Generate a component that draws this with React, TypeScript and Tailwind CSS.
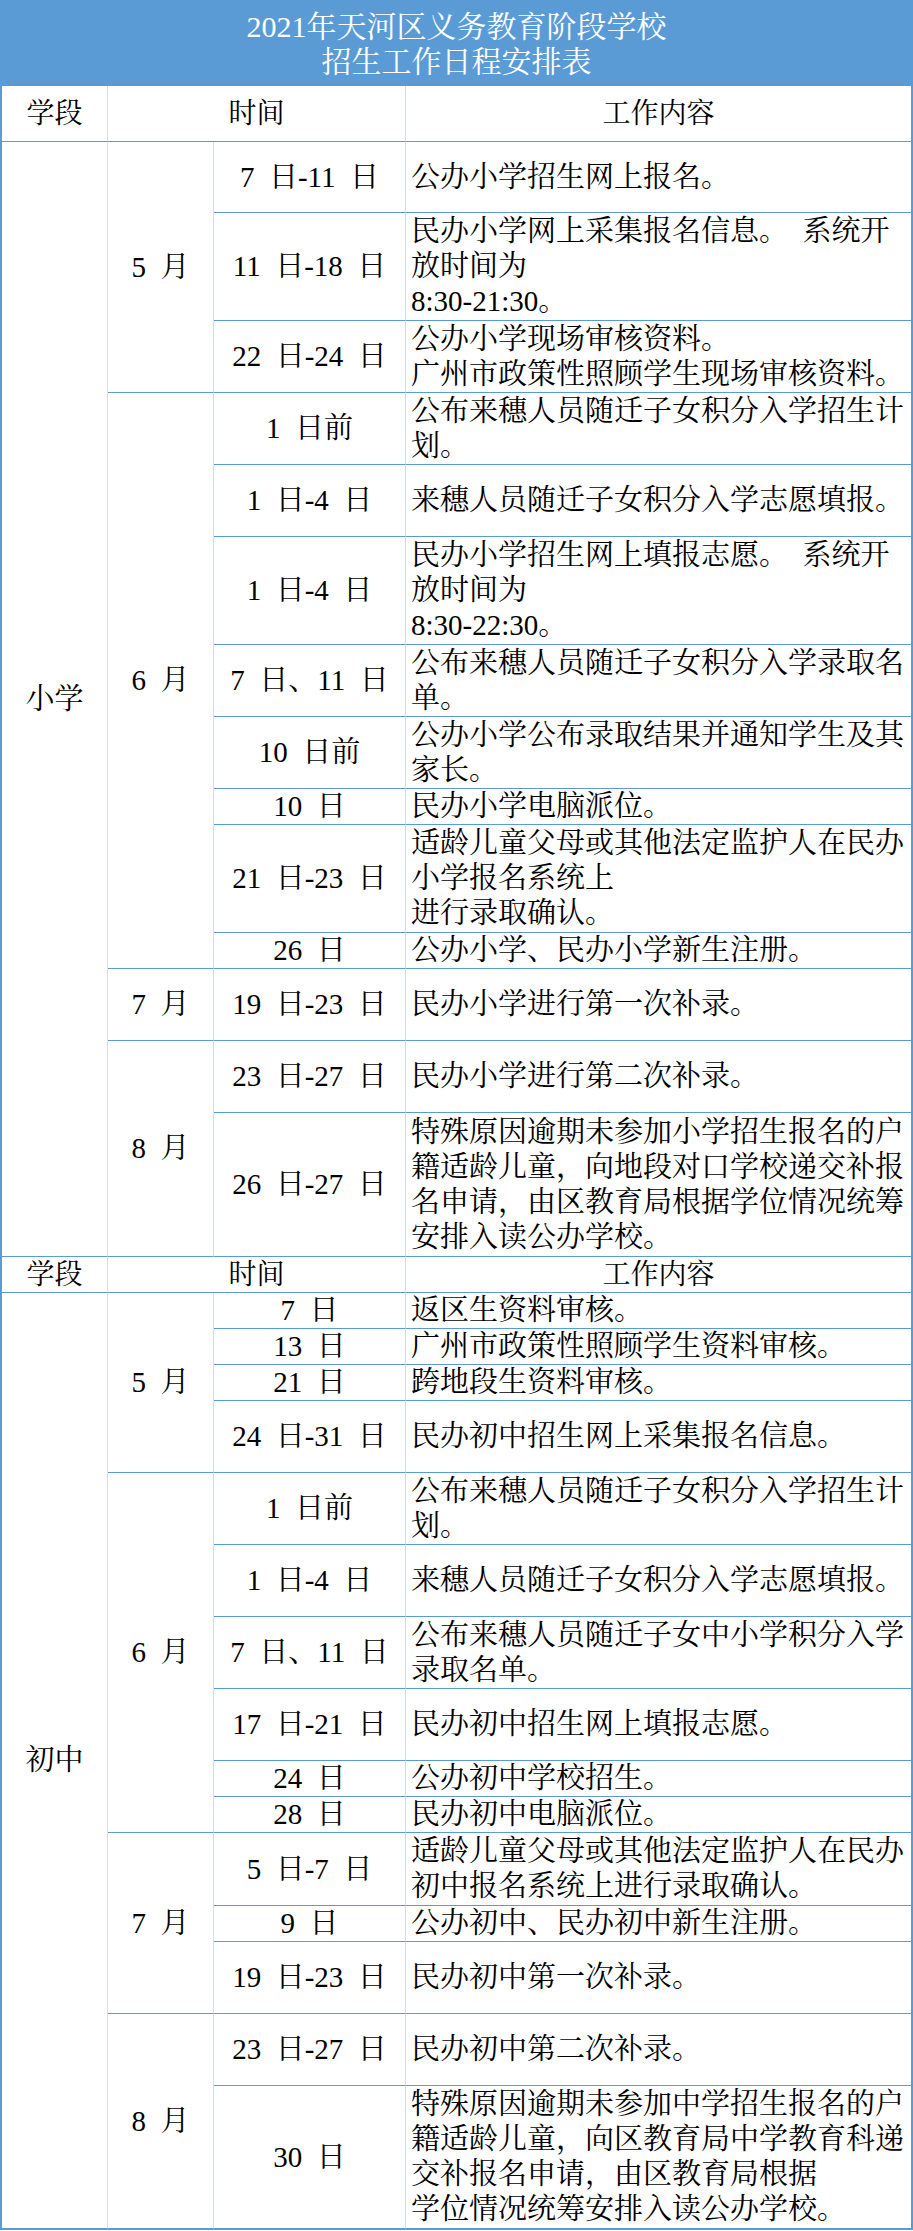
import React from 'react';

type Row = { day: string; lines: string[]; h: string };
type Month = { month: string; rows: Row[] };
type Stage = { stage: string; months: Month[] };

const S = '\u2002';

const primary: Stage = {
    stage: '小学',
    months: [
        {
            month: `5${S}月`,
            rows: [
                { day: `7${S}日-11${S}日`, lines: ['公办小学招生网上报名。'], h: 'h-[71px]' },
                { day: `11${S}日-18${S}日`, lines: [`民办小学网上采集报名信息。${S}系统开`, '放时间为', '8:30-21:30。'], h: 'h-[108px]' },
                { day: `22${S}日-24${S}日`, lines: ['公办小学现场审核资料。', '广州市政策性照顾学生现场审核资料。'], h: 'h-[72px]' },
            ],
        },
        {
            month: `6${S}月`,
            rows: [
                { day: `1${S}日前`, lines: ['公布来穗人员随迁子女积分入学招生计', '划。'], h: 'h-[72px]' },
                { day: `1${S}日-4${S}日`, lines: ['来穗人员随迁子女积分入学志愿填报。'], h: 'h-[72px]' },
                { day: `1${S}日-4${S}日`, lines: [`民办小学招生网上填报志愿。${S}系统开`, '放时间为', '8:30-22:30。'], h: 'h-[108px]' },
                { day: `7${S}日、11${S}日`, lines: ['公布来穗人员随迁子女积分入学录取名', '单。'], h: 'h-[72px]' },
                { day: `10${S}日前`, lines: ['公办小学公布录取结果并通知学生及其', '家长。'], h: 'h-[72px]' },
                { day: `10${S}日`, lines: ['民办小学电脑派位。'], h: 'h-[36px]' },
                { day: `21${S}日-23${S}日`, lines: ['适龄儿童父母或其他法定监护人在民办', '小学报名系统上', '进行录取确认。'], h: 'h-[108px]' },
                { day: `26${S}日`, lines: ['公办小学、民办小学新生注册。'], h: 'h-[36px]' },
            ],
        },
        {
            month: `7${S}月`,
            rows: [
                { day: `19${S}日-23${S}日`, lines: ['民办小学进行第一次补录。'], h: 'h-[72px]' },
            ],
        },
        {
            month: `8${S}月`,
            rows: [
                { day: `23${S}日-27${S}日`, lines: ['民办小学进行第二次补录。'], h: 'h-[72px]' },
                {
                    day: `26${S}日-27${S}日`,
                    lines: ['特殊原因逾期未参加小学招生报名的户', '籍适龄儿童，向地段对口学校递交补报', '名申请，由区教育局根据学位情况统筹', '安排入读公办学校。'],
                    h: 'h-[144px]',
                },
            ],
        },
    ],
};

const junior: Stage = {
    stage: '初中',
    months: [
        {
            month: `5${S}月`,
            rows: [
                { day: `7${S}日`, lines: ['返区生资料审核。'], h: 'h-[36px]' },
                { day: `13${S}日`, lines: ['广州市政策性照顾学生资料审核。'], h: 'h-[36px]' },
                { day: `21${S}日`, lines: ['跨地段生资料审核。'], h: 'h-[36px]' },
                { day: `24${S}日-31${S}日`, lines: ['民办初中招生网上采集报名信息。'], h: 'h-[72px]' },
            ],
        },
        {
            month: `6${S}月`,
            rows: [
                { day: `1${S}日前`, lines: ['公布来穗人员随迁子女积分入学招生计', '划。'], h: 'h-[72px]' },
                { day: `1${S}日-4${S}日`, lines: ['来穗人员随迁子女积分入学志愿填报。'], h: 'h-[72px]' },
                { day: `7${S}日、11${S}日`, lines: ['公布来穗人员随迁子女中小学积分入学', '录取名单。'], h: 'h-[72px]' },
                { day: `17${S}日-21${S}日`, lines: ['民办初中招生网上填报志愿。'], h: 'h-[72px]' },
                { day: `24${S}日`, lines: ['公办初中学校招生。'], h: 'h-[36px]' },
                { day: `28${S}日`, lines: ['民办初中电脑派位。'], h: 'h-[36px]' },
            ],
        },
        {
            month: `7${S}月`,
            rows: [
                { day: `5${S}日-7${S}日`, lines: ['适龄儿童父母或其他法定监护人在民办', '初中报名系统上进行录取确认。'], h: 'h-[73px]' },
                { day: `9${S}日`, lines: ['公办初中、民办初中新生注册。'], h: 'h-[35px]' },
                { day: `19${S}日-23${S}日`, lines: ['民办初中第一次补录。'], h: 'h-[72px]' },
            ],
        },
        {
            month: `8${S}月`,
            rows: [
                { day: `23${S}日-27${S}日`, lines: ['民办初中第二次补录。'], h: 'h-[72px]' },
                {
                    day: `30${S}日`,
                    lines: ['特殊原因逾期未参加中学招生报名的户', '籍适龄儿童，向区教育局中学教育科递', '交补报名申请，由区教育局根据', '学位情况统筹安排入读公办学校。'],
                    h: 'h-[143px]',
                },
            ],
        },
    ],
};

// shared cell borders: blue row lines, pale column lines
const cell = 'p-0 align-middle border-b border-b-[#5b9bd5] border-r border-r-[#d3dff0]';
const lastCell = 'p-0 align-middle border-b border-b-[#5b9bd5] border-r-2 border-r-[#5b9bd5]';
const firstCell = 'border-l-2 border-l-[#5b9bd5]';

function HeaderRow({ h }: { h: string }) {
    return (
        <tr className={`${h} text-[28px]`}>
            <td className={`${cell} ${firstCell} text-center`}>学段</td>
            <td colSpan={2} className={`${cell} text-center`}>时间</td>
            <td className={`${lastCell} text-center`}>工作内容</td>
        </tr>
    );
}

function StageBody({ stage }: { stage: Stage }) {
    const total = stage.months.reduce((n, m) => n + m.rows.length, 0);
    return (
        <tbody>
            {stage.months.map((m, mi) =>
                m.rows.map((r, ri) => (
                    <tr key={`${mi}-${ri}`} className={r.h}>
                        {mi === 0 && ri === 0 && (
                            <td rowSpan={total} className={`${cell} ${firstCell} text-center`}>
                                {stage.stage}
                            </td>
                        )}
                        {ri === 0 && (
                            <td rowSpan={m.rows.length} className={`${cell} text-center`}>
                                {m.month}
                            </td>
                        )}
                        <td className={`${cell} text-center whitespace-nowrap`}>{r.day}</td>
                        <td className={`${lastCell} pl-[5px]`}>
                            {r.lines.map((l, li) => (
                                <div key={li} className="whitespace-nowrap">{l}</div>
                            ))}
                        </td>
                    </tr>
                ))
            )}
        </tbody>
    );
}

export default function App() {
    return (
        <div
            className="w-[913px] bg-white text-black text-[29px] leading-[35px]"
            style={{ fontFamily: '"Liberation Serif", "Noto Serif CJK SC", "Noto Sans CJK SC", serif' }}
        >
            <div className="h-[86px] bg-[#5b9bd5] text-white text-[30px] leading-[35px] text-center pt-[9px]">
                <div>2021年天河区义务教育阶段学校</div>
                <div>招生工作日程安排表</div>
            </div>
            <table className="w-full table-fixed border-separate border-spacing-0 border-b border-b-[#5b9bd5]">
                <colgroup>
                    <col className="w-[108px]" />
                    <col className="w-[106px]" />
                    <col className="w-[192px]" />
                    <col />
                </colgroup>
                <tbody>
                    <HeaderRow h="h-[56px]" />
                </tbody>
                <StageBody stage={primary} />
                <tbody>
                    <HeaderRow h="h-[36px]" />
                </tbody>
                <StageBody stage={junior} />
            </table>
        </div>
    );
}
